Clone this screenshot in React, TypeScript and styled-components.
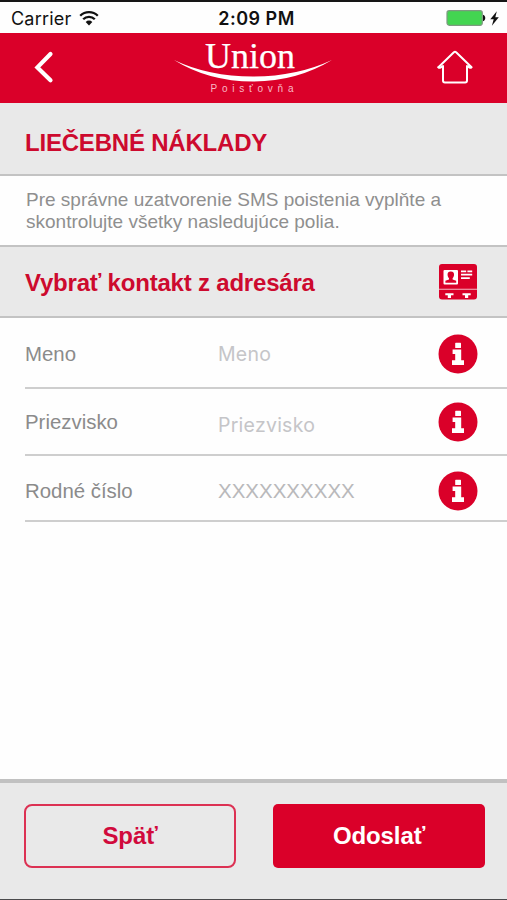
import styled, { createGlobalStyle } from "styled-components";

const RED = "#da0029";
const SANS = `"Liberation Sans", Arial, sans-serif`;
const SYSTEM = `Inter, "Liberation Sans", sans-serif`;

const GlobalStyle = createGlobalStyle`
  * {
    box-sizing: border-box;
  }
  body {
    margin: 0;
    background: white;
  }
`;
const Screen = styled.div`
  display: flex;
  flex-direction: column;
  height: 900px;
  overflow: hidden;
  background: #fefefe;
  border-top: 2px solid #161616;
  border-bottom: 1px solid #4a4a4c;
  font-family: ${SANS};
`;
const StatusBar = styled.div`
  display: grid;
  grid-template-columns: 1fr auto 1fr;
  align-items: center;
  height: 31px;
  flex: none;
  padding: 1px 8px 0 11px;
  font-family: ${SYSTEM};
  color: #111;
`;
const StatusSide = styled.div<{ $end?: boolean }>`
  display: flex;
  align-items: center;
  justify-content: ${(props) => (props.$end ? "flex-end" : "flex-start")};
  gap: ${(props) => (props.$end ? "4px" : "8px")};
`;
const Carrier = styled.span`
  font-size: 18px;
  letter-spacing: 0.2px;
`;
const Clock = styled.span`
  padding-left: 3px;
  font-size: 18px;
  font-weight: 600;
  letter-spacing: 0.5px;
`;
const Header = styled.header`
  display: flex;
  justify-content: space-between;
  height: 70px;
  flex: none;
  padding: 0 33px 0 34px;
  background: ${RED};
`;
const HeaderButton = styled.button`
  display: flex;
  align-items: center;
  width: 38px;
  padding: 0 0 2px;
  border: 0;
  background: none;
`;
const Band = styled.section`
  display: flex;
  align-items: center;
  justify-content: space-between;
  height: 73px;
  flex: none;
  padding: 8px 30px 0 25px;
  background: #e9e9e9;
  border-bottom: 2px solid #c3c3c3;
`;
const BandTitle = styled.h2`
  margin: 0;
  font-size: 24px;
  line-height: 28px;
  font-weight: bold;
  letter-spacing: -0.2px;
  color: #cd0a2e;
`;
const Intro = styled.p`
  height: 71px;
  flex: none;
  margin: 0;
  padding: 13px 26px 0;
  font-size: 19px;
  line-height: 22px;
  color: #8f8f8f;
  border-bottom: 2px solid #c3c3c3;
`;
const ContactBand = styled(Band)`
  height: 71px;
  padding-top: 0;

  ${BandTitle} {
    padding-top: 2px;
  }
`;
const Fields = styled.div`
  flex: 1;
  padding-left: 25px;
`;
const Field = styled.div<{ $height: number; $drop: number }>`
  display: grid;
  grid-template-columns: 193px 1fr 40px;
  align-items: center;
  height: ${(props) => props.$height}px;
  padding: ${(props) => props.$drop}px 29px 0 0;
  border-bottom: 2px solid #cecece;
`;
const Label = styled.label`
  padding-top: 1px;
  font-size: 20.4px;
  color: #8b8b8b;
`;
const Placeholder = styled.span<{ $mask?: boolean; $top: number }>`
  padding-top: ${(props) => props.$top}px;
  font-family: ${(props) => (props.$mask ? SANS : SYSTEM)};
  font-size: ${(props) => (props.$mask ? "20.5px" : "19.5px")};
  letter-spacing: ${(props) => (props.$mask ? "0" : "0.25px")};
  color: ${(props) => (props.$mask ? "#b9b9bb" : "#c5c5c8")};
`;
const Footer = styled.footer`
  display: grid;
  grid-template-columns: 212px 212px;
  gap: 37px;
  height: 120px;
  flex: none;
  padding: 21px 0 0 24px;
  background: #e9e9e9;
  border-top: 4px solid #c1c1c1;
`;
const Button = styled.button<{ $primary?: boolean }>`
  height: 64px;
  padding: 0;
  border: ${(props) => (props.$primary ? "0" : "2px solid #dc3153")};
  border-radius: ${(props) => (props.$primary ? "5px" : "8px")};
  background: ${(props) => (props.$primary ? RED : "transparent")};
  color: ${(props) => (props.$primary ? "white" : "#d10a3c")};
  font-family: ${SANS};
  font-size: 24px;
  font-weight: bold;
  letter-spacing: -0.1px;
`;

const WifiIcon = () => (
  <svg width="20" height="15" viewBox="0 0 20 15" fill="none" stroke="#111">
    <path d="M1.2 4.8a12.6 12.6 0 0 1 17.6 0" strokeWidth="2.3" />
    <path d="M4.2 8.2a8.2 8.2 0 0 1 11.6 0" strokeWidth="2.3" />
    <path d="M10 14.4 6.7 10.9a4.7 4.7 0 0 1 6.6 0Z" fill="#111" stroke="none" />
  </svg>
);
const BatteryIcon = () => (
  <svg width="40" height="16" viewBox="0 0 40 16">
    <rect x="1" y=".7" width="35.3" height="14.6" rx="2.2" fill="#43d551" stroke="#7d9a80" strokeWidth="1.2" />
    <path d="M37 4.8c3 .6 3 5.8 0 6.4Z" fill="#111" />
  </svg>
);
const BoltIcon = () => (
  <svg width="9" height="15" viewBox="0 0 9 15">
    <path d="M6.8.2.3 8.3h3.4L1.9 14.8 8.8 6.2H5.3Z" fill="#111" />
  </svg>
);
const BackIcon = () => (
  <svg width="20" height="34" viewBox="0 0 20 34">
    <path d="M16.5 4 3.4 17.400l13.1 12.800" fill="none" stroke="white" strokeWidth="4.2" strokeLinecap="round" />
  </svg>
);
const HomeIcon = () => (
  <svg width="38" height="36" viewBox="0 0 38 36" fill="none" stroke="white" strokeWidth="2" strokeLinecap="round" strokeLinejoin="round">
    <path d="M2.4 18.2 17.9 3.2q1.100-1 2.200 0l15.500 15q-1.600 1.500-3.400-.6" />
    <path d="M2.4 18.2q1.600 1.500 3.400-.6" />
    <path d="M7 17v14.600q0 1.900 1.900 1.900h20.200q1.900 0 1.900-1.900V17" />
  </svg>
);
const Logo = () => (
  <svg width="165" height="70" viewBox="1.5 0 165 70" fill="white">
    <text x="34.5" y="35.3" fontFamily="Liberation Serif, serif" fontSize="36" textLength="90" lengthAdjust="spacingAndGlyphs" stroke="white" strokeWidth=".25">
      Union
    </text>
    <path d="M3.5 27Q38 43.500 82.500 43.500Q126 43.500 161.500 27Q126 48.500 82.500 48.500Q38 48.500 3.500 27Z" />
    <text x="40" y="58.700" fontFamily="Liberation Sans, sans-serif" fontSize="10" textLength="83" fill="#f9b9c5">
      Poisťovňa
    </text>
  </svg>
);
const ContactIcon = () => (
  <svg width="38" height="36" viewBox="0 0 38 36">
    <path d="M3 0h32q3 0 3 3v29.500q0 3-3 3H3q-3 0-3-3V3q0-3 3-3Z" fill={RED} />
    <path d="M0 25.200h38" stroke="#f3b6c2" strokeWidth="1.1" />
    <rect x="4.5" y="6" width="14.5" height="14.5" rx="1" fill="white" />
    <path d="M11.800 7.500c2.600 0 3.500 1.600 3.200 3.800-.2 1.500-.8 2.300-1.400 2.900v1.200l3.600 1.400v1.900H6.400v-1.900l3.600-1.400v-1.200c-.6-.6-1.200-1.400-1.400-2.900-.3-2.200.6-3.800 3.200-3.800Z" fill={RED} />
    <path d="M22 7.300h5.200M28.400 7.300h4.800M22 10.700h11.200M22 14.200h8.800" stroke="white" strokeWidth="1.7" />
    <path d="M6.300 30.200h8.200M23.500 30.200h8.200" stroke="white" strokeWidth="2.1" />
    <path d="M10.400 30v4M27.600 30v4" stroke="white" strokeWidth="3.2" />
  </svg>
);
const InfoIcon = () => (
  <svg width="40" height="40" viewBox="0 0 40 40">
    <circle cx="20" cy="20" r="19.500" fill={RED} />
    <rect x="17.200" y="8.800" width="5.800" height="5.200" rx=".6" fill="white" />
    <path d="M14.600 15.600h8.600v10.700h2.800v4.600H14v-4.600h3.200v-6.200h-2.600Z" fill="white" />
  </svg>
);

const fields = [
  { label: "Meno", placeholder: "Meno", height: 71, drop: 2, top: 0 },
  { label: "Priezvisko", placeholder: "Priezvisko", height: 67, drop: 1, top: 5 },
  { label: "Rodné číslo", placeholder: "XXXXXXXXXX", height: 66, drop: 6, top: 0, mask: true },
];

function App() {
  return (
    <>
      <GlobalStyle />
      <Screen>
        <StatusBar>
          <StatusSide>
            <Carrier>Carrier</Carrier>
            <WifiIcon />
          </StatusSide>
          <Clock>2:09 PM</Clock>
          <StatusSide $end>
            <BatteryIcon />
            <BoltIcon />
          </StatusSide>
        </StatusBar>
        <Header>
          <HeaderButton aria-label="Späť">
            <BackIcon />
          </HeaderButton>
          <Logo />
          <HeaderButton aria-label="Domov">
            <HomeIcon />
          </HeaderButton>
        </Header>
        <Band>
          <BandTitle>LIEČEBNÉ NÁKLADY</BandTitle>
        </Band>
        <Intro>
          Pre správne uzatvorenie SMS poistenia vyplňte a skontrolujte všetky
          nasledujúce polia.
        </Intro>
        <ContactBand>
          <BandTitle>Vybrať kontakt z adresára</BandTitle>
          <ContactIcon />
        </ContactBand>
        <Fields>
          {fields.map((field) => (
            <Field key={field.label} $height={field.height} $drop={field.drop}>
              <Label>{field.label}</Label>
              <Placeholder $mask={field.mask} $top={field.top}>
                {field.placeholder}
              </Placeholder>
              <InfoIcon />
            </Field>
          ))}
        </Fields>
        <Footer>
          <Button>Späť</Button>
          <Button $primary>Odoslať</Button>
        </Footer>
      </Screen>
    </>
  );
}

export default App;
